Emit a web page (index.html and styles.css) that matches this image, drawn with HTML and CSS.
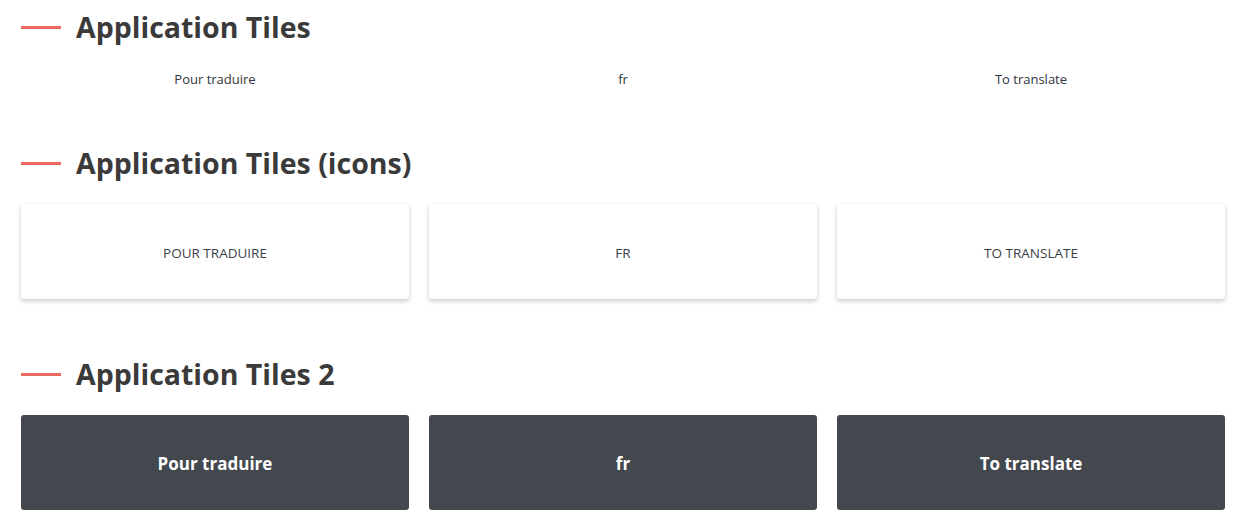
FILE: index.html
```html
<!DOCTYPE html>
<html lang="en">
<head>
<meta charset="utf-8">
<title>Application Tiles</title>
<link rel="stylesheet" href="styles.css">
</head>
<body>
<main class="page">
  <section class="section section-first">
    <div class="section-head">
      <span class="accent"></span>
      <h2 class="title">Application Tiles</h2>
    </div>
    <div class="grid plain-row">
      <div class="plain">Pour traduire</div>
      <div class="plain">fr</div>
      <div class="plain">To translate</div>
    </div>
  </section>

  <section class="section section-second">
    <div class="section-head">
      <span class="accent"></span>
      <h2 class="title">Application Tiles (icons)</h2>
    </div>
    <div class="grid">
      <div class="tile tile-light">POUR TRADUIRE</div>
      <div class="tile tile-light">FR</div>
      <div class="tile tile-light">TO TRANSLATE</div>
    </div>
  </section>

  <section class="section section-third">
    <div class="section-head">
      <span class="accent"></span>
      <h2 class="title">Application Tiles 2</h2>
    </div>
    <div class="grid">
      <div class="tile tile-dark">Pour traduire</div>
      <div class="tile tile-dark">fr</div>
      <div class="tile tile-dark">To translate</div>
    </div>
  </section>
</main>
</body>
</html>
```

FILE: styles.css
```css
html, body {
  margin: 0;
  padding: 0;
  background: #ffffff;
}

body {
  font-family: "Open Sans", "Noto Sans", "Liberation Sans", sans-serif;
  color: #3a3a3a;
}

.page {
  padding: 0 13px 0 21px;
}

.section-first {
  padding-top: 9px;
}

.section-second {
  padding-top: 56px;
}

.section-third {
  padding-top: 57px;
}

.section-head {
  display: flex;
  align-items: center;
  height: 36px;
}

.accent {
  display: block;
  width: 40px;
  height: 3px;
  background: #ec6a62;
  margin-right: 15px;
}

.title {
  margin: 0;
  font-size: 28.5px;
  line-height: 36px;
  font-weight: 700;
  color: #3a3a3a;
}

.grid {
  display: grid;
  grid-template-columns: repeat(3, 1fr);
  gap: 20px;
  margin-top: 23px;
}

.plain-row {
  margin-top: 24px;
}

.plain {
  text-align: center;
  font-size: 13px;
  line-height: 20px;
  color: #2f3440;
}

.tile {
  height: 95px;
  border-radius: 3px;
  display: flex;
  align-items: center;
  justify-content: center;
}

.tile-light {
  background: #ffffff;
  box-shadow: 0 2px 5px rgba(0, 0, 0, 0.22);
  font-size: 13.5px;
  color: #3b3f48;
  padding-top: 2px;
  box-sizing: border-box;
}

.tile-dark {
  background: #43474e;
  color: #ffffff;
  font-size: 17px;
  font-weight: 700;
  padding-top: 2px;
  box-sizing: border-box;
}
```
